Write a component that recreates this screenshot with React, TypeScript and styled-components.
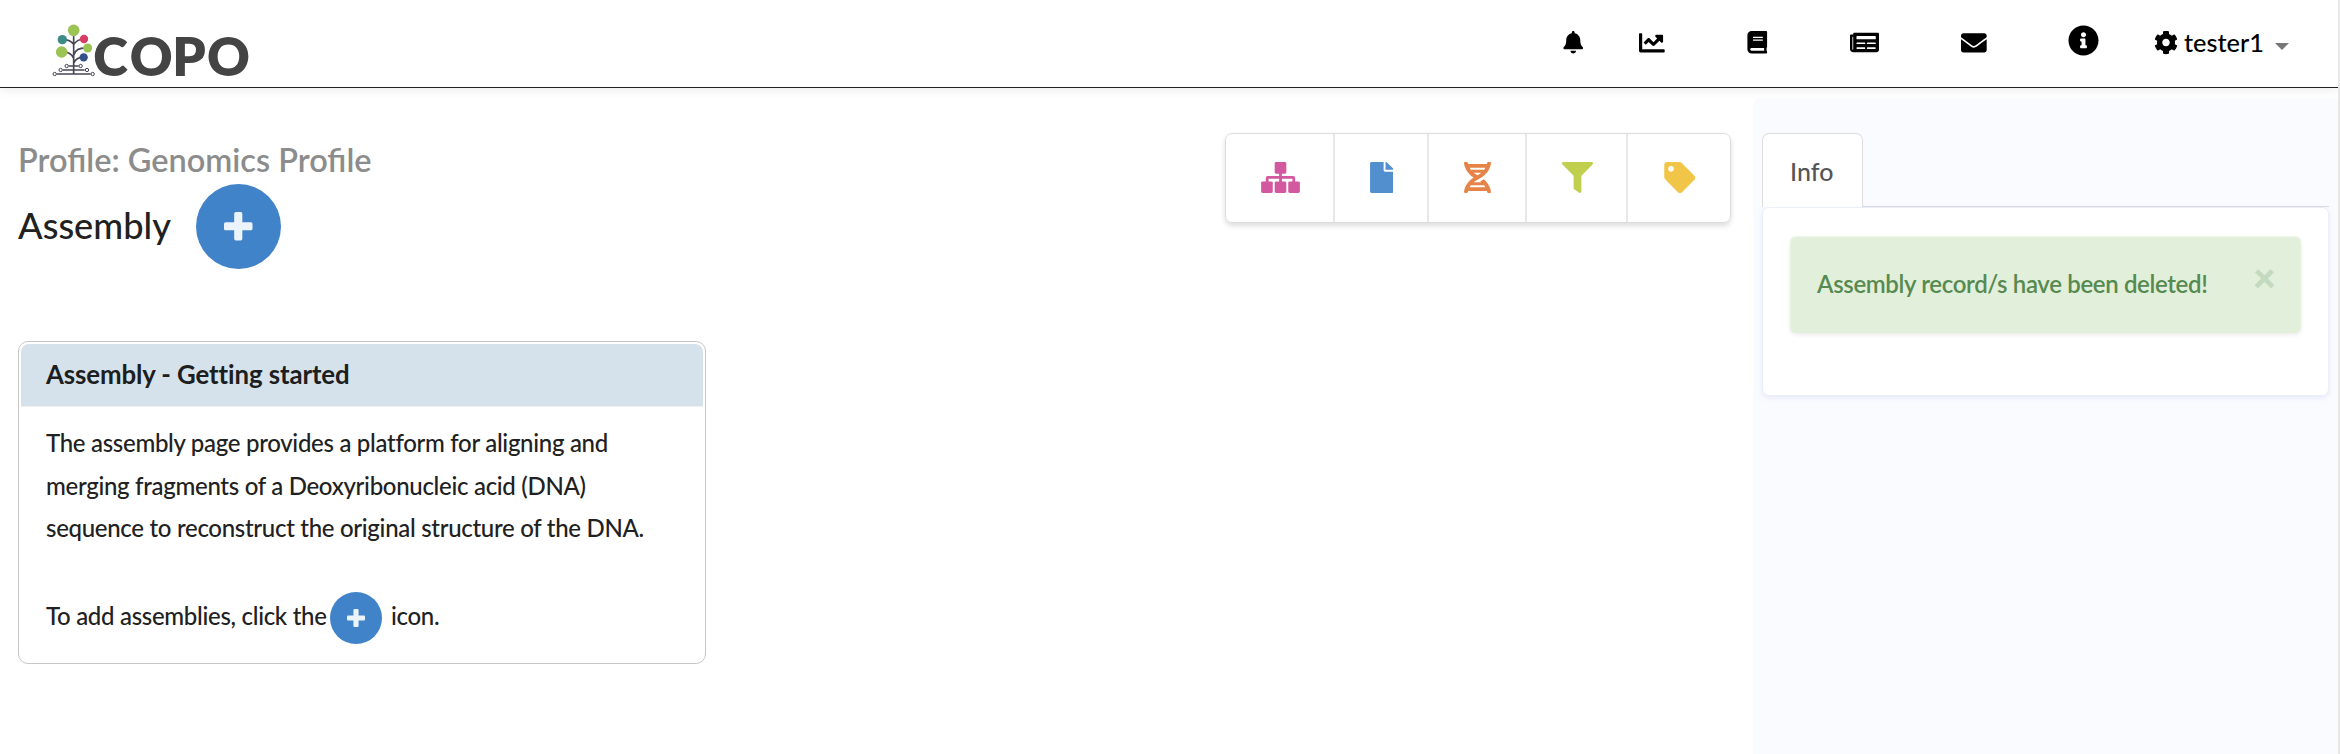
import React from 'react';
import styled, { createGlobalStyle } from 'styled-components';
import {
  FaBell, FaChartLine, FaBook, FaNewspaper, FaEnvelope, FaInfoCircle, FaCog,
  FaFile, FaDna, FaFilter, FaTag,
} from 'react-icons/fa';

const GlobalStyle = createGlobalStyle`
  *, *::before, *::after { box-sizing: border-box; }
  body {
    margin: 0;
    background: #fff;
    color: #212121;
    font-family: Lato, 'Open Sans', sans-serif;
    font-size: 24px;
    font-weight: 500;
    letter-spacing: -0.3px;
  }
`;

const Page = styled.div`
  height: 754px;
  display: flex;
  flex-direction: column;
  border-right: 2px solid #e8e8e8;
  overflow: hidden;
`;

const Header = styled.header`
  flex: none;
  height: 88px;
  display: flex;
  align-items: flex-start;
  background: #fff;
  border-bottom: 1px solid #222;
  box-shadow: 0 2px 10px rgba(0, 0, 0, 0.08);
`;

const Brand = styled.a`
  margin: 10px auto 0 40px;
  height: 76px;
  svg { display: block; }
`;

const NavIcon = styled.a<{ $w: number; $gap: number }>`
  display: flex;
  align-items: center;
  height: 85px;
  width: ${p => p.$w}px;
  margin-right: ${p => p.$gap}px;
  color: #000;
  svg { width: 100%; height: auto; flex: none; }
`;

const InfoLink = styled(NavIcon)`
  height: 81px;
`;

const UserMenu = styled.a`
  display: flex;
  align-items: center;
  height: 84px;
  width: 184px;
  color: #000;
  font-size: 25.3px;
  letter-spacing: 0;
  line-height: 30px;
  svg { width: 24px; height: 25px; margin-right: 6px; }
`;

const Caret = styled.i`
  margin: 9px 0 0 11px;
  border: 7px solid transparent;
  border-top-color: #777;
  border-bottom: 0;
`;

const Content = styled.div`
  flex: 1;
  display: flex;
`;

const Main = styled.main`
  width: 1753px;
  display: flex;
  justify-content: space-between;
  align-items: flex-start;
  padding: 45px 22px 0 18px;
`;

const ProfileName = styled.h2`
  margin: 7px 0 0;
  font-size: 32.5px;
  font-weight: 600;
  letter-spacing: 0;
  line-height: 40px;
  color: #8c8c8c;
`;

const TitleRow = styled.div`
  display: flex;
  align-items: center;
  margin-top: 4px;
`;

const Title = styled.h1`
  width: 178px;
  margin: 0;
  padding-bottom: 3px;
  font-size: 36.2px;
  font-weight: 500;
  letter-spacing: 0;
  line-height: 44px;
`;

const AddCircle = styled.span<{ $size: number }>`
  display: inline-flex;
  align-items: center;
  justify-content: center;
  flex: none;
  width: ${p => p.$size}px;
  height: ${p => p.$size}px;
  border-radius: 50%;
  background: #4183c9;
`;

const Card = styled.section`
  width: 688px;
  height: 323px;
  margin-top: 72px;
  padding: 2px;
  border: 1px solid #c6c6c6;
  border-radius: 10px;
`;

const CardHeader = styled.h3`
  margin: 0;
  height: 63px;
  padding-left: 25px;
  border-bottom: 1px solid #eee;
  border-radius: 8px 8px 0 0;
  background: #d6e2eb;
  font-size: 25.8px;
  font-weight: 700;
  letter-spacing: -0.1px;
  line-height: 61px;
  color: #1c1e20;
`;

const CardText = styled.p`
  margin: 0;
  padding: 15px 25px 0;
  line-height: 42.6px;
`;

const AddHint = styled.div`
  display: flex;
  align-items: center;
  margin: 42px 25px 0;
  line-height: 48px;
`;

const HintText = styled.span`
  width: 284px;
  white-space: nowrap;
  padding-bottom: 4px;
`;

const HintEnd = styled(HintText)`
  width: 60px;
  margin-left: 9px;
`;

const Toolbar = styled.nav`
  display: flex;
  height: 90px;
  border: 1px solid #dcdcdd;
  border-radius: 7px;
  box-shadow: 0 3px 5px rgba(34, 36, 38, 0.15);
`;

const Tool = styled.button<{ $w: number; $icon: number; $color: string }>`
  display: flex;
  align-items: center;
  justify-content: center;
  width: ${p => p.$w}px;
  padding: 0 0 1px 1px;
  border: 0;
  border-right: 2px solid #e8e8e8;
  background: none;
  color: ${p => p.$color};
  &:last-child { border-right: 0; }
  svg { width: ${p => p.$icon}px; height: 31px; }
`;

const Side = styled.aside`
  flex: 1;
  margin-top: 10px;
  padding: 35px 9px 0;
  background: #fafbff;
  border-top-left-radius: 7px;
`;

const Tabs = styled.div`
  display: flex;
  height: 74px;
  border-bottom: 1px solid #d9dadf;
`;

const Tab = styled.a`
  width: 101px;
  height: 74px;
  padding-left: 27px;
  border: 1px solid #dcdde0;
  border-bottom: 0;
  border-radius: 7px 7px 0 0;
  background: #fff;
  font-size: 25px;
  letter-spacing: 0;
  line-height: 75px;
  color: #555;
`;

const Panel = styled.div`
  height: 189px;
  padding: 28px 27px;
  border: 1px solid #e9eef9;
  border-radius: 7px;
  background: #fff;
  box-shadow: 0 2px 5px rgba(200, 210, 235, 0.4);
`;

const Alert = styled.div`
  display: flex;
  justify-content: space-between;
  height: 97px;
  padding: 0 25px 0 27px;
  border-radius: 6px;
  background: #e2efda;
  box-shadow: 0 2px 4px rgba(0, 0, 0, 0.08), inset 0 1px 2px rgba(255, 255, 255, 0.5);
  font-weight: 600;
  letter-spacing: -0.35px;
  line-height: 95px;
  color: #568a50;
`;

const Close = styled.button`
  align-self: flex-start;
  padding: 0;
  border: 0;
  background: none;
  font: 800 40px/82px Lato, sans-serif;
  color: #c4dac0;
`;

const Plus = ({ size }: { size: number }) => (
  <svg width={size} height={size} viewBox="0 0 28 28" fill="#ebf3fb">
    <rect x="10" width="8" height="28" rx="1.6" />
    <rect y="10" width="28" height="8" rx="1.6" />
  </svg>
);

const Sitemap = () => (
  <svg viewBox="0 0 640 512" fill="currentColor">
    <rect x="224" width="192" height="192" rx="24" />
    <rect y="320" width="192" height="192" rx="24" />
    <rect x="224" y="320" width="192" height="192" rx="24" />
    <rect x="448" y="320" width="192" height="192" rx="24" />
    <path d="M100 330v-65q0-12 12-12h416q12 0 12 12v65M320 180v150" fill="none" stroke="currentColor" strokeWidth="46" />
  </svg>
);

const Logo = () => (
  <svg width="220" height="76" viewBox="0 0 660 228">
    <g fill="none" stroke="#4a4658" strokeWidth="5">
      <path d="M101 70V192M67 89Q90 88 100 102M132 87Q112 88 102 102M143 114Q108 112 102 134M65 126Q92 124 100 144M130 142Q108 142 102 158" />
      <path d="M86 168h30M68 180h66M50 192h102" strokeWidth="4" />
    </g>
    <g fill="#fff" stroke="#4a4658" strokeWidth="3">
      <circle cx="80" cy="168" r="5" /><circle cx="122" cy="168" r="5" />
      <circle cx="62" cy="180" r="5" /><circle cx="141" cy="180" r="5" />
      <circle cx="44" cy="192" r="5" /><circle cx="158" cy="192" r="5" />
    </g>
    <circle cx="101" cy="61" r="17.5" fill="#9bc455" />
    <circle cx="67" cy="89" r="14" fill="#3f8b88" />
    <circle cx="132" cy="87" r="12.5" fill="#d63d63" />
    <circle cx="143" cy="114" r="13.5" fill="#9bc455" />
    <circle cx="65" cy="126" r="17.5" fill="#9bc455" />
    <circle cx="131" cy="142" r="12.5" fill="#34508a" />
    <text x="160 269 397 501" y="199" fontFamily="Lato, sans-serif" fontWeight="800" fontSize="158" letterSpacing="0" fill="#444">COPO</text>
  </svg>
);

export default function App() {
  return (
    <Page>
      <GlobalStyle />
      <Header>
        <Brand><Logo /></Brand>
        <NavIcon $w={22.5} $gap={54.5}><FaBell /></NavIcon>
        <NavIcon $w={25.7} $gap={81.3}><FaChartLine /></NavIcon>
        <NavIcon $w={22.5} $gap={81.8}><FaBook /></NavIcon>
        <NavIcon $w={29} $gap={81.7}><FaNewspaper /></NavIcon>
        <NavIcon $w={25.7} $gap={81}><FaEnvelope /></NavIcon>
        <InfoLink $w={31} $gap={55.5}><FaInfoCircle /></InfoLink>
        <UserMenu><FaCog />tester1<Caret /></UserMenu>
      </Header>
      <Content>
        <Main>
          <div>
            <ProfileName>Profile: Genomics Profile</ProfileName>
            <TitleRow>
              <Title>Assembly</Title>
              <AddCircle $size={85}><Plus size={28.5} /></AddCircle>
            </TitleRow>
            <Card>
              <CardHeader>Assembly - Getting started</CardHeader>
              <CardText>
                The assembly page provides a platform for aligning and<br />
                merging fragments of a Deoxyribonucleic acid (DNA)<br />
                sequence to reconstruct the original structure of the DNA.
              </CardText>
              <AddHint>
                <HintText>To add assemblies, click the</HintText>
                <AddCircle $size={52}><Plus size={18} /></AddCircle>
                <HintEnd>icon.</HintEnd>
              </AddHint>
            </Card>
          </div>
          <Toolbar>
            <Tool $w={109} $icon={39} $color="#d2599f"><Sitemap /></Tool>
            <Tool $w={94} $icon={23.4} $color="#518fcf"><FaFile /></Tool>
            <Tool $w={98} $icon={27} $color="#e68448"><FaDna /></Tool>
            <Tool $w={101} $icon={31} $color="#c0cf4e"><FaFilter /></Tool>
            <Tool $w={102} $icon={31.5} $color="#f1c648"><FaTag /></Tool>
          </Toolbar>
        </Main>
        <Side>
          <Tabs><Tab>Info</Tab></Tabs>
          <Panel>
            <Alert>Assembly record/s have been deleted!<Close>×</Close></Alert>
          </Panel>
        </Side>
      </Content>
    </Page>
  );
}
